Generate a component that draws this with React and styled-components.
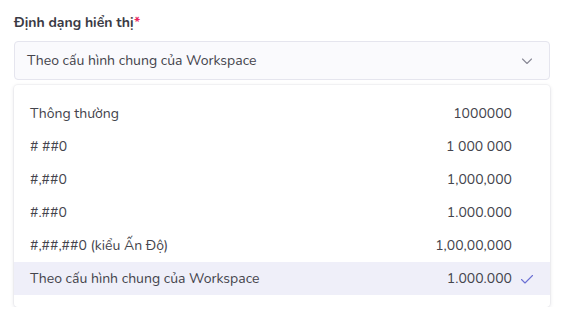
import React, { useState } from 'react';
import styled, { createGlobalStyle } from 'styled-components';

const GlobalStyle = createGlobalStyle`
  html, body {
    margin: 0;
    padding: 0;
    background: #ffffff;
    font-family: "Nunito", "Lato", "Open Sans", sans-serif;
  }
`;

const OPTIONS = [
  { label: 'Thông thường', sample: '1000000' },
  { label: '# ##0', sample: '1 000 000' },
  { label: '#,##0', sample: '1,000,000' },
  { label: '#.##0', sample: '1.000.000' },
  { label: '#,##,##0 (kiểu Ấn Độ)', sample: '1,00,00,000' },
  { label: 'Theo cấu hình chung của Workspace', sample: '1.000.000' },
];

const Chevron = () => (
  <svg width="12" height="12" viewBox="0 0 12 12" fill="none">
    <path d="M1.5 4l4.5 4.5L10.5 4" stroke="#8a8a96" strokeWidth="1.1" strokeLinecap="round" strokeLinejoin="round" />
  </svg>
);

const Check = () => (
  <svg width="14" height="12" viewBox="0 0 14 12" fill="none">
    <path d="M1.5 6.5l3.5 3.5L12.5 2.5" stroke="#6b6fd4" strokeWidth="1.1" strokeLinecap="round" strokeLinejoin="round" />
  </svg>
);

const App = () => {
  const [selected, setSelected] = useState(OPTIONS.length - 1);
  return (
    <>
      <GlobalStyle />
      <Field>
        <Label>
          Định dạng hiển thị<Required>*</Required>
        </Label>
        <SelectBox>
          <SelectValue>{OPTIONS[selected].label}</SelectValue>
          <Chevron />
        </SelectBox>
        <Menu>
          {OPTIONS.map((opt, i) => (
            <Option key={i} active={i === selected} onClick={() => setSelected(i)}>
              <OptionLabel>{opt.label}</OptionLabel>
              <OptionSample>{opt.sample}</OptionSample>
              <CheckSlot>{i === selected && <Check />}</CheckSlot>
            </Option>
          ))}
        </Menu>
      </Field>
    </>
  );
};

const Field = styled.div`
  display: flex;
  flex-direction: column;
  padding: 13px 12px 0 14px;
  width: 536px;
`;

const Label = styled.div`
  font-size: 14px;
  font-weight: 700;
  color: #3a3a44;
  line-height: 20px;
  margin-bottom: 8px;
`;

const Required = styled.span`
  color: #e8265e;
`;

const SelectBox = styled.div`
  display: flex;
  align-items: center;
  justify-content: space-between;
  height: 37px;
  padding: 0 16px 0 12px;
  border: 1px solid #e5e5ee;
  border-radius: 4px;
  background: #fafafd;
`;

const SelectValue = styled.span`
  font-size: 14px;
  color: #44444c;
`;

const Menu = styled.div`
  display: flex;
  flex-direction: column;
  margin-top: 5px;
  padding: 12px 0 12px;
  background: #ffffff;
  border-radius: 4px;
  box-shadow: 0 1px 4px rgba(20, 20, 60, 0.12), 0 0 0 1px rgba(20, 20, 60, 0.03);
`;

const Option = styled.div`
  display: flex;
  align-items: center;
  height: 33px;
  padding: 0 16px 0 16px;
  background: ${(p) => (p.active ? '#efeff9' : 'transparent')};
  cursor: pointer;
`;

const OptionLabel = styled.span`
  flex: 1;
  font-size: 14px;
  color: #44444c;
`;

const OptionSample = styled.span`
  font-size: 14px;
  color: #44444c;
`;

const CheckSlot = styled.span`
  display: flex;
  align-items: center;
  justify-content: center;
  width: 14px;
  margin-left: 8px;
`;

export default App;
